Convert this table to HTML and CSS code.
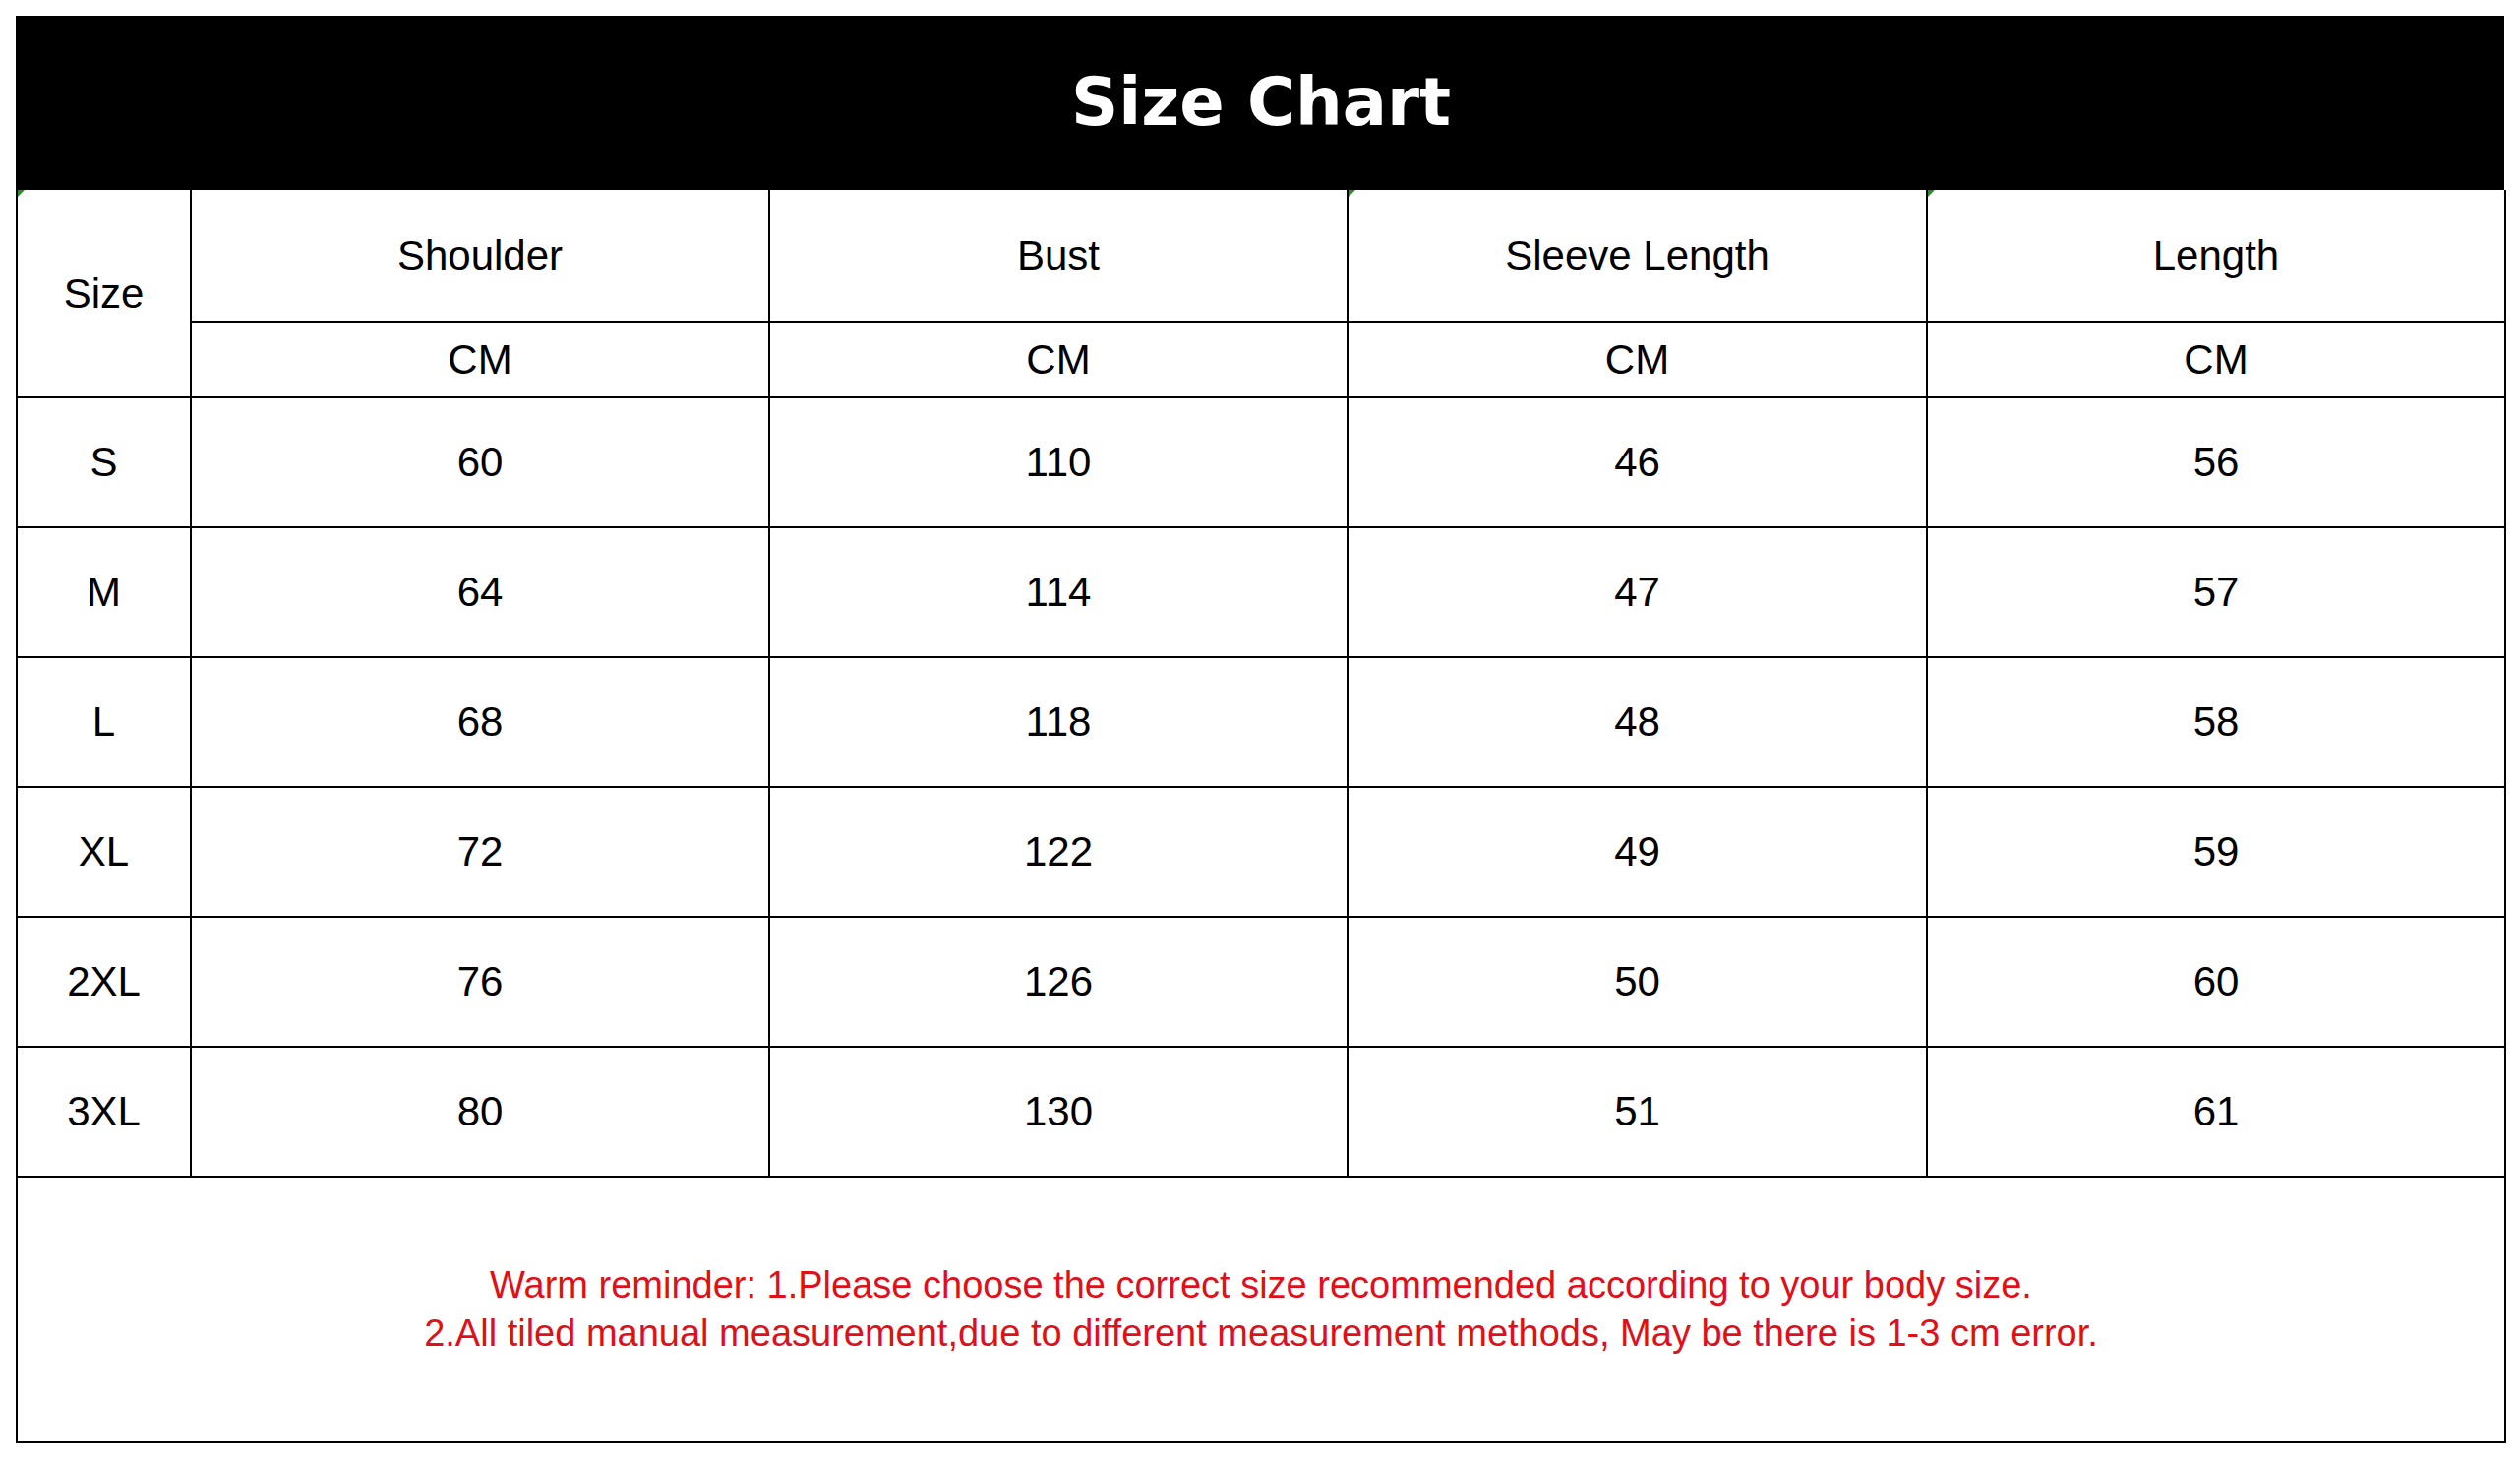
FILE: index.html
```html
<!DOCTYPE html>
<html lang="en">
<head>
<meta charset="utf-8">
<title>Size Chart</title>
<link rel="stylesheet" href="styles.css">
</head>
<body>
<div class="chart">
  <div class="title-bar"><h1 class="title">Size Chart</h1></div>
  <table class="grid">
    <colgroup>
      <col class="c-size">
      <col class="c-val">
      <col class="c-val">
      <col class="c-val c-wide">
      <col class="c-val">
    </colgroup>
    <thead>
      <tr class="r-head">
        <th class="mark" rowspan="2">Size</th>
        <th>Shoulder</th>
        <th>Bust</th>
        <th class="mark">Sleeve Length</th>
        <th class="mark">Length</th>
      </tr>
      <tr class="r-unit">
        <th>CM</th>
        <th>CM</th>
        <th>CM</th>
        <th>CM</th>
      </tr>
    </thead>
    <tbody>
      <tr class="r-data"><td>S</td><td>60</td><td>110</td><td>46</td><td>56</td></tr>
      <tr class="r-data"><td>M</td><td>64</td><td>114</td><td>47</td><td>57</td></tr>
      <tr class="r-data"><td>L</td><td>68</td><td>118</td><td>48</td><td>58</td></tr>
      <tr class="r-data"><td>XL</td><td>72</td><td>122</td><td>49</td><td>59</td></tr>
      <tr class="r-data"><td>2XL</td><td>76</td><td>126</td><td>50</td><td>60</td></tr>
      <tr class="r-data"><td>3XL</td><td>80</td><td>130</td><td>51</td><td>61</td></tr>
      <tr class="r-note">
        <td colspan="5" class="note">
          <p class="note-line">Warm reminder: 1.Please choose the correct size recommended according to your body size.</p>
          <p class="note-line">2.All tiled manual measurement,due to different measurement methods, May be there is 1-3 cm error.</p>
        </td>
      </tr>
    </tbody>
  </table>
</div>
</body>
</html>
```

FILE: styles.css
```css
html, body {
  margin: 0;
  padding: 0;
  background: #ffffff;
}

body {
  padding: 16px 16px 18px 16px;
  font-family: "Liberation Sans", Arial, sans-serif;
  color: #000;
}

.chart {
  width: 2530px;
  display: flex;
  flex-direction: column;
}

.title-bar {
  height: 177px;
  background: #000;
  display: flex;
  align-items: center;
  justify-content: center;
}

.title {
  margin: 0;
  color: #fff;
  font-family: "Comic Sans MS", "DejaVu Sans", sans-serif;
  font-weight: bold;
  font-size: 67px;
  letter-spacing: 0px;
  line-height: 1;
  padding-left: 2px;
}

.grid {
  width: 2530px;
  border-collapse: collapse;
  table-layout: fixed;
  border: 2px solid #000;
  border-top: none;
}

.c-size { width: 177px; }
.c-val { width: 588px; }
.c-wide { width: 589px; }

.grid th,
.grid td {
  border: 2px solid #000;
  padding: 0;
  text-align: center;
  vertical-align: middle;
  font-weight: normal;
  font-size: 42px;
  line-height: 1;
  position: relative;
}

.grid thead tr:first-child th {
  border-top: none;
}

.r-head { height: 134px; }
.r-unit { height: 77px; }
.r-data { height: 132px; }
.r-note { height: 270px; }

.r-head th {
  padding-top: 1px;
}

.mark::before {
  content: "";
  position: absolute;
  left: 0;
  top: 0;
  width: 0;
  height: 0;
  border-top: 7px solid #2e8b2e;
  border-right: 7px solid transparent;
}

.note {
  color: #e0101a;
  padding-top: 12px;
}

.note-line {
  margin: 0;
  font-size: 38px;
  line-height: 49px;
}
```
